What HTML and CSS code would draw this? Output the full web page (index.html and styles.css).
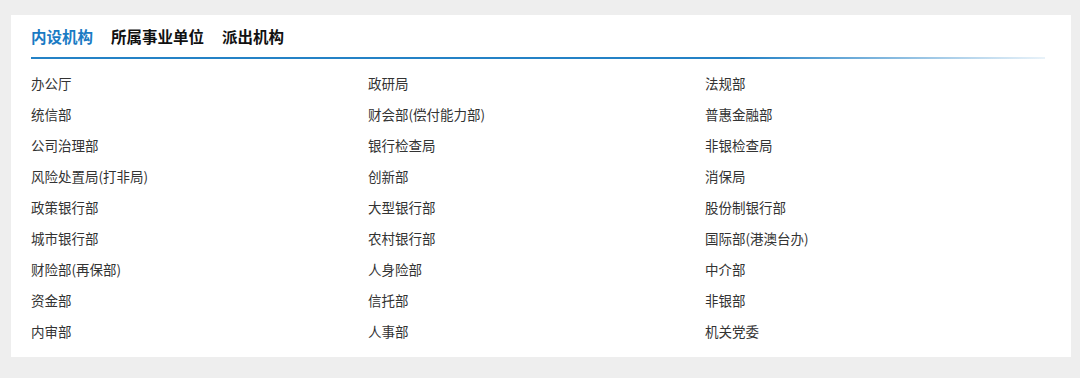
FILE: index.html
```html
<!DOCTYPE html>
<html lang="zh-CN">
<head>
    <meta charset="UTF-8">
    <title>机构设置</title>
    <link rel="stylesheet" href="styles.css">
</head>
<body>
    <div class="panel">
        <div class="tabs">
            <span class="tab active">内设机构</span>
            <span class="tab">所属事业单位</span>
            <span class="tab">派出机构</span>
        </div>
        <ul class="org-list">
            <li>办公厅</li>
            <li>政研局</li>
            <li>法规部</li>
            <li>统信部</li>
            <li>财会部(偿付能力部)</li>
            <li>普惠金融部</li>
            <li>公司治理部</li>
            <li>银行检查局</li>
            <li>非银检查局</li>
            <li>风险处置局(打非局)</li>
            <li>创新部</li>
            <li>消保局</li>
            <li>政策银行部</li>
            <li>大型银行部</li>
            <li>股份制银行部</li>
            <li>城市银行部</li>
            <li>农村银行部</li>
            <li>国际部(港澳台办)</li>
            <li>财险部(再保部)</li>
            <li>人身险部</li>
            <li>中介部</li>
            <li>资金部</li>
            <li>信托部</li>
            <li>非银部</li>
            <li>内审部</li>
            <li>人事部</li>
            <li>机关党委</li>
        </ul>
    </div>
</body>
</html>
```

FILE: styles.css
```css
body {
    margin: 0;
    padding: 15px 9px 21px 11px;
    background: #eeeeee;
    font-family: "Microsoft YaHei", "Noto Sans CJK SC", sans-serif;
    color: #333;
}
.panel {
    background: #fff;
    height: 342px;
    box-sizing: border-box;
    padding: 9px 26px 0 20px;
}
.tabs {
    display: flex;
    gap: 18px;
    padding-bottom: 11px;
    position: relative;
}
.tabs::after {
    content: "";
    position: absolute;
    left: 0;
    right: 0;
    bottom: 0;
    height: 2px;
    background: linear-gradient(to right, #2482c6 0%, #2482c6 70%, rgba(36, 130, 198, 0.1) 100%);
}
.tab {
    font-size: 15.5px;
    font-weight: bold;
    line-height: 24px;
    color: #111;
    cursor: pointer;
}
.tab.active {
    color: #1a7bc4;
}
.org-list {
    list-style: none;
    margin: 9px 0 0;
    padding: 0;
    display: grid;
    grid-template-columns: repeat(3, 337px);
}
.org-list li {
    font-size: 13.5px;
    line-height: 31px;
    color: #333;
}
```
